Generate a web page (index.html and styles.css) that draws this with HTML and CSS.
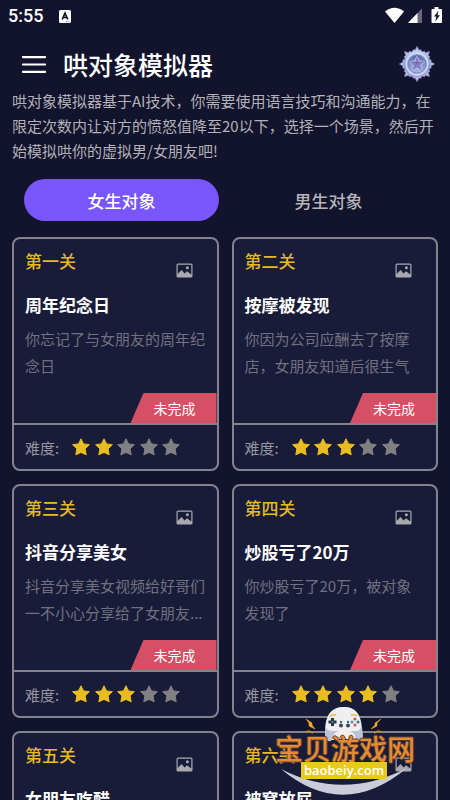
FILE: index.html
```html
<!DOCTYPE html>
<html lang="zh-CN">
<head>
<meta charset="utf-8">
<meta name="viewport" content="width=device-width, initial-scale=1">
<title>哄对象模拟器</title>
<link rel="stylesheet" href="styles.css">
</head>
<body>
<svg class="defs" aria-hidden="true">
  <symbol id="star" viewBox="0 0 18 18"><path d="M9 .8l2.500 5.100 5.900.8-4.300 4.100 1.100 6L9 14.400l-5.200 2.400 1.100-6L.6 6.700l5.900-.8z" stroke="currentColor" stroke-width="1" stroke-linejoin="round" fill="currentColor"/></symbol>
  <symbol id="picture" viewBox="0 0 17 15"><path fill="currentColor" fill-rule="evenodd" d="M2 .5h13A1.500 1.500 0 0 1 16.500 2v11a1.500 1.500 0 0 1-1.500 1.500H2A1.500 1.500 0 0 1 .5 13V2A1.500 1.500 0 0 1 2 .5zM1.700 1.700v9.300L5.500 7 8.600 10.500l2.400-2.200 4.300 3.200V1.700z"/><circle cx="11.400" cy="4.700" r="1.500" fill="currentColor"/></symbol>
</svg>
<div class="app">
  <div class="status">
    <span class="clock">5:55</span>
    <svg class="note" viewBox="0 0 12 13" aria-hidden="true"><rect width="12" height="13" rx="1.500" fill="#fff"/><path d="M3.200 9.500L6 3.200l2.800 6.300M4.300 7.500h3.400" fill="none" stroke="#12132d" stroke-width="1.700"/><path d="M6.500 11.700h4" stroke="#777" stroke-width=".7"/></svg>
    <svg class="signals" viewBox="0 0 58 18" aria-hidden="true">
      <path d="M0 4.500Q9.500-3 19 4.500L9.500 16z" fill="#fff"/>
      <path d="M37 1.500V16H23z" fill="#686978"/><path d="M32.500 6v10H23z" fill="#fff"/>
      <path d="M49.500 0h4v2h2.500q1 0 1 1v12q0 1-1 1h-8.500q-1 0-1-1V3q0-1 1-1h2z" fill="#fff"/>
      <path d="M53.500 3.500l-4.500 6h2.300l-1 5 4.700-6.200h-2.500z" fill="#12132d"/>
    </svg>
  </div>
  <header class="header">
    <button class="menu" aria-label="菜单"><svg viewBox="0 0 24 18" aria-hidden="true"><path d="M1.500 2h21M1.500 9h21M1.500 16h21" stroke="#fff" stroke-width="2" stroke-linecap="round"/></svg></button>
    <h1>哄对象模拟器</h1>
    <button class="medal" aria-label="成就"><svg viewBox="-18 -18 36 36" aria-hidden="true">
      <defs>
        <linearGradient id="rim" x1="0" y1="0" x2="0" y2="1"><stop offset="0" stop-color="#c3d0ea"/><stop offset=".5" stop-color="#8797cb"/><stop offset="1" stop-color="#a99fdc"/></linearGradient>
        <linearGradient id="disc" x1="0" y1="0" x2="0" y2="1"><stop offset="0" stop-color="#5267a8"/><stop offset="1" stop-color="#a6b9e6"/></linearGradient>
        <path id="petal" d="M-4.500-12L-4-14.300-2-14 0-17.700 2-14 4-14.300 4.500-12z"/>
      </defs>
      <g fill="#b3c0e4" stroke="#7884bd" stroke-width=".6">
        <use href="#petal"/><use href="#petal" transform="rotate(45)"/><use href="#petal" transform="rotate(90)"/><use href="#petal" transform="rotate(135)"/><use href="#petal" transform="rotate(180)"/><use href="#petal" transform="rotate(225)"/><use href="#petal" transform="rotate(270)"/><use href="#petal" transform="rotate(315)"/>
      </g>
      <circle r="13.500" fill="url(#rim)"/>
      <circle r="11" fill="#a9b6e0" stroke="#d3dcf5" stroke-width="1.300"/><circle r="9" fill="url(#disc)" stroke="#7080bb" stroke-width=".8"/>
      <path d="M0-8l2.200 5L8-2.500 3.700 1.500 5 7 0 4.200-5 7l1.300-5.500L-8-2.500l5.800-.5z" fill="#8b83c8" stroke="#c7cff2" stroke-width=".9"/>
      <path d="M0-8v7l8-1.500M0-1l5 8M0-1l-5 8M0-1l-8-1.500" fill="none" stroke="#6964aa" stroke-width=".6"/><circle cy="-1" r="1" fill="#a04ca2"/>
    </svg></button>
  </header>
  <p class="intro">哄对象模拟器基于AI技术，你需要使用语言技巧和沟通能力，在限定次数内让对方的愤怒值降至20以下，选择一个场景，然后开始模拟哄你的虚拟男/女朋友吧!</p>
  <nav class="tabs">
    <button class="tab active">女生对象</button>
    <button class="tab">男生对象</button>
  </nav>
  <main class="levels">
    <article class="card">
      <div class="body"><div class="top"><span class="level">第一关</span><svg class="pic"><use href="#picture"/></svg></div><h2>周年纪念日</h2><p class="desc">你忘记了与女朋友的周年纪念日</p><span class="ribbon">未完成</span></div>
      <div class="foot"><span>难度:</span><div class="stars"><svg class="on"><use href="#star"/></svg><svg class="on"><use href="#star"/></svg><svg><use href="#star"/></svg><svg><use href="#star"/></svg><svg><use href="#star"/></svg></div></div>
    </article>
    <article class="card">
      <div class="body"><div class="top"><span class="level">第二关</span><svg class="pic"><use href="#picture"/></svg></div><h2>按摩被发现</h2><p class="desc">你因为公司应酬去了按摩店，女朋友知道后很生气</p><span class="ribbon">未完成</span></div>
      <div class="foot"><span>难度:</span><div class="stars"><svg class="on"><use href="#star"/></svg><svg class="on"><use href="#star"/></svg><svg class="on"><use href="#star"/></svg><svg><use href="#star"/></svg><svg><use href="#star"/></svg></div></div>
    </article>
    <article class="card">
      <div class="body"><div class="top"><span class="level">第三关</span><svg class="pic"><use href="#picture"/></svg></div><h2>抖音分享美女</h2><p class="desc">抖音分享美女视频给好哥们<br>一不小心分享给了女朋友...</p><span class="ribbon">未完成</span></div>
      <div class="foot"><span>难度:</span><div class="stars"><svg class="on"><use href="#star"/></svg><svg class="on"><use href="#star"/></svg><svg class="on"><use href="#star"/></svg><svg><use href="#star"/></svg><svg><use href="#star"/></svg></div></div>
    </article>
    <article class="card">
      <div class="body"><div class="top"><span class="level">第四关</span><svg class="pic"><use href="#picture"/></svg></div><h2>炒股亏了20万</h2><p class="desc">你炒股亏了20万，被对象发现了</p><span class="ribbon">未完成</span></div>
      <div class="foot"><span>难度:</span><div class="stars"><svg class="on"><use href="#star"/></svg><svg class="on"><use href="#star"/></svg><svg class="on"><use href="#star"/></svg><svg class="on"><use href="#star"/></svg><svg><use href="#star"/></svg></div></div>
    </article>
    <article class="card">
      <div class="body"><div class="top"><span class="level">第五关</span><svg class="pic"><use href="#picture"/></svg></div><h2>女朋友吃醋</h2></div>
    </article>
    <article class="card">
      <div class="body"><div class="top"><span class="level">第六关</span><svg class="pic"><use href="#picture"/></svg></div><h2>被窝放屁</h2></div>
    </article>
  </main>
  <div class="brand">
    <svg class="brand-art" viewBox="0 0 150 94" aria-hidden="true">
      <path d="M6 65Q68 117 132 64Q68 97 6 65z" fill="#cbccda"/>
      <path d="M50 23Q52 3 69 3Q85 3 87 23L88 32Q88 38 82 37L76 30H61L56 37Q50 38 50 32z" fill="#bcc3d4"/>
      <path d="M51 20Q53 3 69 3Q84 3 86 20Q87 27 81 27H57Q50 27 51 20z" fill="#efeff2"/>
      <path d="M57 36Q58 26 69 26Q80 26 81 36z" fill="#f4eeea"/>
      <path d="M55 12q3-2 6-1M76 11q4-1 6 1" stroke="#f0b23d" stroke-width="1.500" fill="none"/>
      <path d="M56 14h3v2.500h2.500v3H59V22h-3v-2.500h-2.500v-3H56z" fill="#243544"/><circle cx="57.500" cy="18" r="1" fill="#6c96a8"/>
      <circle cx="66" cy="21.500" r="2" fill="#34465b"/><circle cx="73" cy="21.500" r="2" fill="#34465b"/><circle cx="66" cy="18" r="1.200" fill="#526474"/><circle cx="73" cy="18" r="1.200" fill="#526474"/>
      <circle cx="80" cy="15" r="1.500" fill="#d9504e"/><circle cx="80" cy="21" r="1.500" fill="#d9504e"/><circle cx="77" cy="18" r="1.500" fill="#4f93bc"/><circle cx="83" cy="18" r="1.500" fill="#317c90"/>
      <path d="M31 15l6 4v2l3 4-6-3v-3zM106 15l-6 4v2l-4 4 6-3v-3z" fill="#f2ad28" stroke="#f2ad28" stroke-width=".5"/>
      <path d="M30 28l4-1 4 2M99 29l4-2 4 1" fill="none" stroke="#c48a28" stroke-width="1.500"/>
    </svg>
    <strong>宝贝游戏网</strong>
    <span class="domain">baobeiy.com</span>
  </div>
</div>
</body>
</html>
```
FILE: styles.css
```css
* { box-sizing: border-box; }
body {
  margin: 0;
  background: #12132d;
  color: #fff;
  font-family: "Noto Sans CJK SC", sans-serif;
}
h1, h2, p { margin: 0; }
button { border: 0; padding: 0; background: none; color: inherit; font: inherit; }
svg { display: block; }
.defs { position: absolute; width: 0; height: 0; }
.app { position: relative; height: 100vh; overflow: hidden; padding: 0 12px; }
.status { display: flex; align-items: center; height: 32px; margin: 0 -5px 0 -4px; }
.clock { font: 500 18px/32px Roboto, sans-serif; }
.note { width: 12px; height: 13px; margin-left: 16px; }
.signals { width: 58px; height: 18px; margin-left: auto; }
.header { display: flex; align-items: center; height: 56px; padding: 8px 3px 0 9px; }
.menu svg { width: 26px; height: 19px; }
h1 { flex: 1; margin-left: 16px; font-size: 25px; line-height: 36px; font-weight: 500; }
.medal svg { width: 36px; height: 36px; }
.intro { color: #b2b2b8; font-size: 15px; line-height: 25px; }
.tabs { display: grid; grid-template-columns: 1fr 1fr; gap: 12px; padding: 0 12px; margin: 16px 0; }
.tab { height: 42px; border-radius: 21px; color: #b5b5b9; font-size: 17px; font-weight: 500; }
.tab.active { background: #7856fc; color: #fff; }
.levels { display: grid; grid-template-columns: 1fr 1fr; grid-auto-rows: 234px; gap: 13px; }
.card { display: flex; flex-direction: column; border: 2px solid #82838f; border-radius: 8px; background: #191c39; overflow: hidden; }
.body { position: relative; flex: 1; padding: 8px 11px; }
.top { display: flex; justify-content: space-between; height: 32px; }
.level { color: #e6b925; font-size: 17px; line-height: 28px; font-weight: 500; }
.pic { width: 17px; height: 15px; margin: 16px 13px 0 0; color: #a8a9ae; }
h2 { margin: 12px 0 6px; font-size: 17px; line-height: 28px; font-weight: 700; }
.desc { color: #707180; font-size: 15px; line-height: 27px; }
.ribbon { position: absolute; right: 0; bottom: 0; width: 86px; padding-left: 23px; background: #d55064; clip-path: polygon(13px 0, 100% 0, 100% 100%, 0 100%); font-size: 14px; line-height: 30px; }
.foot { display: flex; align-items: center; height: 46px; padding: 0 11px; border-top: 2px solid #82838f; color: #9596a0; font-size: 15px; }
.stars { display: flex; justify-content: space-between; width: 108px; margin-left: 13px; }
.stars svg { width: 18px; height: 18px; color: #808082; }
.stars .on { color: #e9bd20; }
.brand { position: absolute; right: 25px; bottom: 2px; width: 150px; height: 94px; text-align: center; }
.brand-art { position: absolute; inset: 0; }
.brand strong { position: relative; display: block; padding: 28px 10px 0 0; color: #e38b31; font-size: 28px; line-height: 32px; font-weight: 500; white-space: nowrap; text-shadow: 1px 0 #5a3c37, -1px 0 #5a3c37, 0 1px #5a3c37, 0 -1px #5a3c37; }
.domain { position: relative; display: block; width: 86px; margin: -2px 0 0 26px; background: #e8c91e; color: #fff; font: 600 13px/17px "Open Sans", sans-serif; }
```
